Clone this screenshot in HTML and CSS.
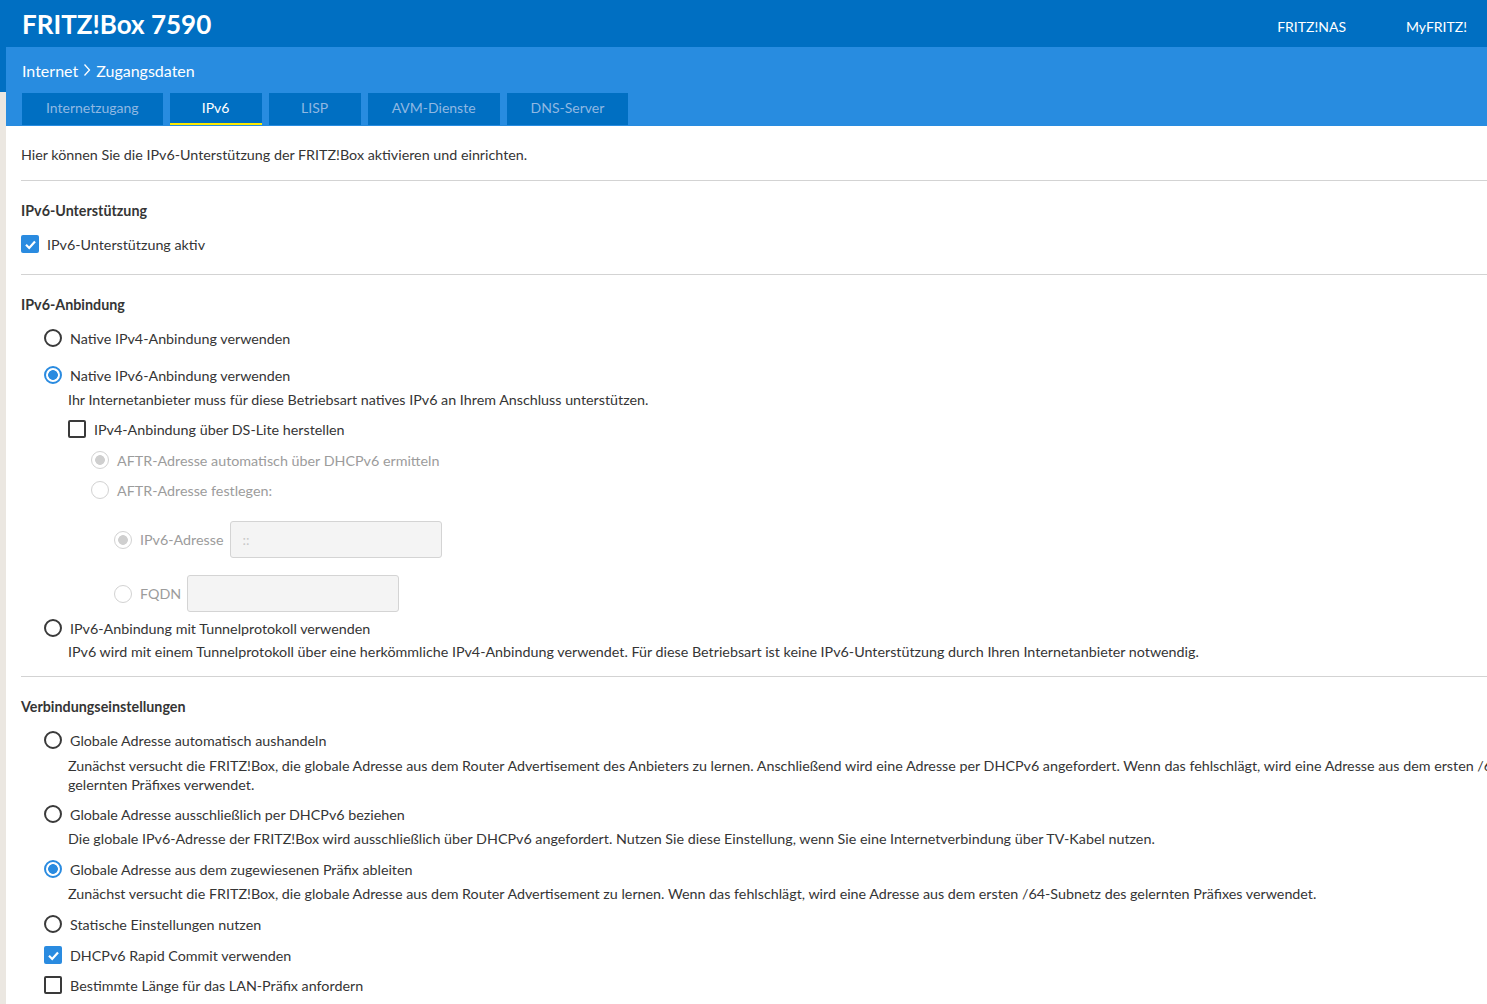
FILE: index.html
```html
<!DOCTYPE html>
<html lang="de">
  <head>
    <meta charset="UTF-8" />
    <title>FRITZ!Box 7590</title>
    <link rel="stylesheet" href="styles.css">
  </head>
  <body>
    <header class="topbar">
      <div class="brand">FRITZ!Box 7590</div>
      <nav class="toplinks">
        <span>FRITZ!NAS</span>
        <span>MyFRITZ!</span>
      </nav>
    </header>

    <div class="page">
      <div class="subhead">
        <div class="crumbs">
          Internet
          <svg class="chev" width="8" height="14" viewBox="0 0 8 14"><polyline points="1.5,1.5 6.5,7 1.5,12.5" fill="none" stroke="#fff" stroke-width="1.3"/></svg>
          Zugangsdaten
        </div>
        <div class="tabs">
          <span class="tab">Internetzugang</span>
          <span class="tab active">IPv6</span>
          <span class="tab">LISP</span>
          <span class="tab">AVM-Dienste</span>
          <span class="tab">DNS-Server</span>
        </div>
      </div>

      <main class="content">
        <p class="intro">Hier können Sie die IPv6-Unterstützung der FRITZ!Box aktivieren und einrichten.</p>
        <hr class="rule">

        <h3 class="heading">IPv6-Unterstützung</h3>
        <div class="row gap13">
          <span class="check on"><svg width="17" height="17" viewBox="0 0 17 17"><polyline points="4,8.8 7.2,12 13,5.5" fill="none" stroke="#fff" stroke-width="2.2"/></svg></span>
          <span class="lbl">IPv6-Unterstützung aktiv</span>
        </div>
        <hr class="rule r20">

        <h3 class="heading">IPv6-Anbindung</h3>
        <div class="row lv1 gap13"><span class="radio"></span><span class="lbl">Native IPv4-Anbindung verwenden</span></div>
        <div class="row lv1 gap17"><span class="radio on"></span><span class="lbl">Native IPv6-Anbindung verwenden</span></div>
        <p class="desc">Ihr Internetanbieter muss für diese Betriebsart natives IPv6 an Ihrem Anschluss unterstützen.</p>
        <div class="row lv2 gap9"><span class="check"></span><span class="lbl">IPv4-Anbindung über DS-Lite herstellen</span></div>
        <div class="row lv3 gap11 off"><span class="radio dis on"></span><span class="lbl">AFTR-Adresse automatisch über DHCPv6 ermitteln</span></div>
        <div class="row lv3 gap10 off"><span class="radio dis"></span><span class="lbl">AFTR-Adresse festlegen:</span></div>
        <div class="row field lv4 gap21 off">
          <span class="radio dis on"></span><span class="lbl">IPv6-Adresse</span>
          <input class="textbox" type="text" placeholder="::" disabled>
        </div>
        <div class="row field lv4 gap17 off">
          <span class="radio dis"></span><span class="lbl">FQDN</span>
          <input class="textbox" type="text" disabled>
        </div>
        <div class="row lv1 gap6"><span class="radio"></span><span class="lbl">IPv6-Anbindung mit Tunnelprotokoll verwenden</span></div>
        <p class="desc tight">IPv6 wird mit einem Tunnelprotokoll über eine herkömmliche IPv4-Anbindung verwendet. Für diese Betriebsart ist keine IPv6-Unterstützung durch Ihren Internetanbieter notwendig.</p>
        <hr class="rule r14">

        <h3 class="heading">Verbindungseinstellungen</h3>
        <div class="row lv1 gap13"><span class="radio"></span><span class="lbl">Globale Adresse automatisch aushandeln</span></div>
        <p class="desc multi">Zunächst versucht die FRITZ!Box, die globale Adresse aus dem Router Advertisement des Anbieters zu lernen. Anschließend wird eine Adresse per DHCPv6 angefordert. Wenn das fehlschlägt, wird eine Adresse aus dem ersten /64-Subnetz des gelernten Präfixes verwendet.</p>
        <div class="row lv1 gap10"><span class="radio"></span><span class="lbl">Globale Adresse ausschließlich per DHCPv6 beziehen</span></div>
        <p class="desc">Die globale IPv6-Adresse der FRITZ!Box wird ausschließlich über DHCPv6 angefordert. Nutzen Sie diese Einstellung, wenn Sie eine Internetverbindung über TV-Kabel nutzen.</p>
        <div class="row lv1 gap10"><span class="radio on"></span><span class="lbl">Globale Adresse aus dem zugewiesenen Präfix ableiten</span></div>
        <p class="desc">Zunächst versucht die FRITZ!Box, die globale Adresse aus dem Router Advertisement zu lernen. Wenn das fehlschlägt, wird eine Adresse aus dem ersten /64-Subnetz des gelernten Präfixes verwendet.</p>
        <div class="row lv1 gap10"><span class="radio"></span><span class="lbl">Statische Einstellungen nutzen</span></div>
        <div class="row lv1 gap11">
          <span class="check on"><svg width="17" height="17" viewBox="0 0 17 17"><polyline points="4,8.8 7.2,12 13,5.5" fill="none" stroke="#fff" stroke-width="2.2"/></svg></span>
          <span class="lbl">DHCPv6 Rapid Commit verwenden</span>
        </div>
        <div class="row lv1 gap10"><span class="check"></span><span class="lbl">Bestimmte Länge für das LAN-Präfix anfordern</span></div>
      </main>
    </div>
  </body>
</html>
```

FILE: styles.css
```css
html, body {
  overflow: hidden;
}
body {
  margin: 0;
  background: linear-gradient(#006fc2 0 92px, #ebe7e1 92px);
  font-family: "Lato", "Liberation Sans", sans-serif;
  font-size: 14.3px;
  color: #353535;
}
.topbar {
  height: 47px;
  background: #006fc2;
  display: flex;
  align-items: center;
  justify-content: space-between;
  padding: 0 20px 0 22px;
  color: #fff;
}
.brand {
  font-size: 26px;
  font-weight: 700;
}
.toplinks {
  display: flex;
  gap: 60px;
  font-size: 14px;
  padding-top: 6px;
}
.page {
  margin-left: 6px;
  background: #fff;
  min-height: 960px;
}
.subhead {
  background: #288ce0;
  padding: 11px 0 0 16px;
  height: 68px;
}
.crumbs {
  color: #fff;
  font-size: 16px;
  height: 24px;
  display: flex;
  align-items: center;
  gap: 5px;
}
.tabs {
  display: flex;
  gap: 7px;
  margin-top: 11px;
}
.tab {
  background: #006fc2;
  color: #8fb8e2;
  font-size: 14px;
  height: 32px;
  min-width: 92px;
  padding: 0 24px 3px;
  display: flex;
  align-items: center;
  justify-content: center;
  box-sizing: border-box;
}
.tab.active {
  color: #fff;
  border-bottom: 2px solid #ffea00;
  padding-bottom: 1px;
}
.content {
  width: 1600px;
  padding: 19px 0 40px 15px;
}
.intro {
  margin: 0;
  line-height: 20px;
}
.rule {
  border: 0;
  border-top: 1px solid #d3d3d3;
  margin: 15px 0 0;
}
.r20 { margin-top: 20px; }
.r14 { margin-top: 14px; }
.heading {
  margin: 20px 0 0;
  font-size: 14.3px;
  font-weight: 700;
  line-height: 20px;
}
.row {
  display: flex;
  align-items: center;
  height: 20px;
}
.row.field {
  height: 37px;
}
.gap6 { margin-top: 6px; }
.gap9 { margin-top: 9px; }
.gap10 { margin-top: 10px; }
.gap11 { margin-top: 11px; }
.gap13 { margin-top: 13px; }
.gap17 { margin-top: 17px; }
.gap21 { margin-top: 21px; }
.lv1 { padding-left: 23px; }
.lv2 { padding-left: 47px; }
.lv3 { padding-left: 70px; }
.lv4 { padding-left: 93px; }
.lbl {
  margin-left: 8px;
}
.off {
  color: #9c9c9c;
}
.desc {
  margin: 5px 0 0;
  padding-left: 47px;
  line-height: 20px;
}
.desc.tight {
  margin-top: 4px;
}
.desc.multi {
  line-height: 19px;
  padding-top: 1px;
}
.radio {
  width: 18px;
  height: 18px;
  box-sizing: border-box;
  border: 2px solid #3a3a3a;
  border-radius: 50%;
  flex: none;
}
.radio.on {
  border-color: #2a8be0;
  background: radial-gradient(circle, #2a8be0 0 4.5px, #fff 5.2px);
}
.radio.dis {
  border: 1.5px solid #d2d2d2;
}
.radio.dis.on {
  background: radial-gradient(circle, #cfcfcf 0 4.5px, #fff 5.2px);
}
.check {
  width: 18px;
  height: 18px;
  box-sizing: border-box;
  border: 2px solid #3a3a3a;
  border-radius: 2px;
  flex: none;
}
.check.on {
  border: 0;
  background: #2a8be0;
  display: flex;
  align-items: center;
  justify-content: center;
}
.textbox {
  margin-left: 6px;
  width: 212px;
  height: 37px;
  box-sizing: border-box;
  border: 1px solid #d4d4d4;
  border-radius: 3px;
  background: #f4f4f4;
  font-family: inherit;
  font-size: 14px;
  padding: 0 12px;
}
.textbox::placeholder {
  color: #c8c8c8;
}
```
